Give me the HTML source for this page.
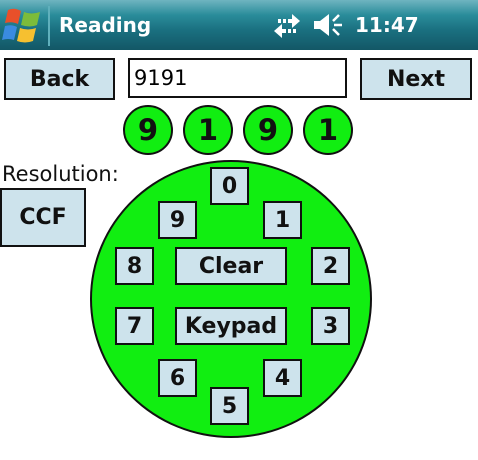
<!DOCTYPE html>
<html><head><style>
body{margin:0;width:478px;height:460px;background:#fff;position:relative;overflow:hidden;font-family:"DejaVu Sans",sans-serif}
.bar{position:absolute;left:0;top:0;width:478px;height:50px;background:linear-gradient(180deg,#6fb4c0 0%,#2a8c9a 30%,#1a7080 60%,#135766 100%)}
.sep{position:absolute;left:48px;top:6px;width:2px;height:40px;background:#5fb0bc}
.t{position:absolute;color:#fff;font-weight:bold;font-size:20px}
.btn{position:absolute;background:#cde3ec;border:2px solid #111;box-sizing:border-box;display:flex;align-items:center;justify-content:center;font-weight:bold;color:#111;font-size:22px}
.dig{position:absolute;width:50px;height:50px;border-radius:50%;background:#11ee11;border:2px solid #111;box-sizing:border-box;display:flex;align-items:center;justify-content:center;font-weight:bold;font-size:29px;color:#111}
</style></head><body>
<div class="bar"></div>
<svg style="position:absolute;left:2px;top:6px" width="42" height="40" viewBox="0 0 42 40">
<path d="M6 4 Q12 1 19 5 L16 18 Q10 15 3 17 Z" fill="#e8502a"/>
<path d="M22 6 Q29 9 38 6 L35 19 Q28 22 19 19 Z" fill="#7cbc3a"/>
<path d="M3 20 Q10 18 15 21 L12 34 Q6 32 0 34 Z" fill="#3a8be0"/>
<path d="M18 22 Q26 25 34 22 L31 35 Q23 38 15 35 Z" fill="#f6c030"/>
</svg>
<div class="sep"></div>
<div class="t" style="left:59px;top:13px">Reading</div>
<svg style="position:absolute;left:272px;top:12px" width="30" height="28" viewBox="0 0 30 28">
<rect x="6" y="7" width="3" height="4" fill="#fff"/><rect x="11" y="7" width="3" height="4" fill="#fff"/><rect x="16" y="7" width="4" height="4" fill="#fff"/><path d="M20 2l8 7-8 7z" fill="#fff"/>
<rect x="21" y="17" width="3" height="4" fill="#fff"/><rect x="16" y="17" width="3" height="4" fill="#fff"/><rect x="10" y="17" width="4" height="4" fill="#fff"/><path d="M10 12l-8 7 8 7z" fill="#fff"/>
</svg>
<svg style="position:absolute;left:312px;top:12px" width="32" height="26" viewBox="0 0 32 26"><path d="M2 9h6l9-7v22l-9-7H2z" fill="#fff"/><path d="M22 13h8M21 9l6-6M21 17l6 6" stroke="#fff" stroke-width="2.5"/></svg>
<div class="t" style="left:355px;top:13px">11:47</div>
<div class="btn" style="left:4px;top:58px;width:111px;height:42px">Back</div>
<div style="position:absolute;left:128px;top:58px;width:219px;height:40px;border:2px solid #111;box-sizing:border-box;font-size:21px;padding:6px 0 0 4px">9191</div>
<div class="btn" style="left:360px;top:58px;width:112px;height:42px">Next</div>
<div class="dig" style="left:123px;top:105px">9</div>
<div class="dig" style="left:183px;top:105px">1</div>
<div class="dig" style="left:243px;top:105px">9</div>
<div class="dig" style="left:303px;top:105px">1</div>
<div style="position:absolute;left:2px;top:162px;font-size:21px;color:#111">Resolution:</div>
<div class="btn" style="left:0;top:188px;width:86px;height:59px">CCF</div>
<div style="position:absolute;left:90px;top:160px;width:282px;height:278px;border-radius:50%;background:#11ee11;border:2px solid #111;box-sizing:border-box"></div>
<div class="btn" style="left:210px;top:167px;width:39px;height:38px">0</div>
<div class="btn" style="left:158px;top:201px;width:39px;height:38px">9</div>
<div class="btn" style="left:263px;top:201px;width:39px;height:38px">1</div>
<div class="btn" style="left:115px;top:247px;width:39px;height:38px">8</div>
<div class="btn" style="left:175px;top:247px;width:112px;height:38px">Clear</div>
<div class="btn" style="left:311px;top:247px;width:39px;height:38px">2</div>
<div class="btn" style="left:115px;top:307px;width:39px;height:38px">7</div>
<div class="btn" style="left:175px;top:307px;width:112px;height:38px">Keypad</div>
<div class="btn" style="left:311px;top:307px;width:39px;height:38px">3</div>
<div class="btn" style="left:158px;top:359px;width:39px;height:38px">6</div>
<div class="btn" style="left:263px;top:359px;width:39px;height:38px">4</div>
<div class="btn" style="left:210px;top:387px;width:39px;height:38px">5</div>
</body></html>
